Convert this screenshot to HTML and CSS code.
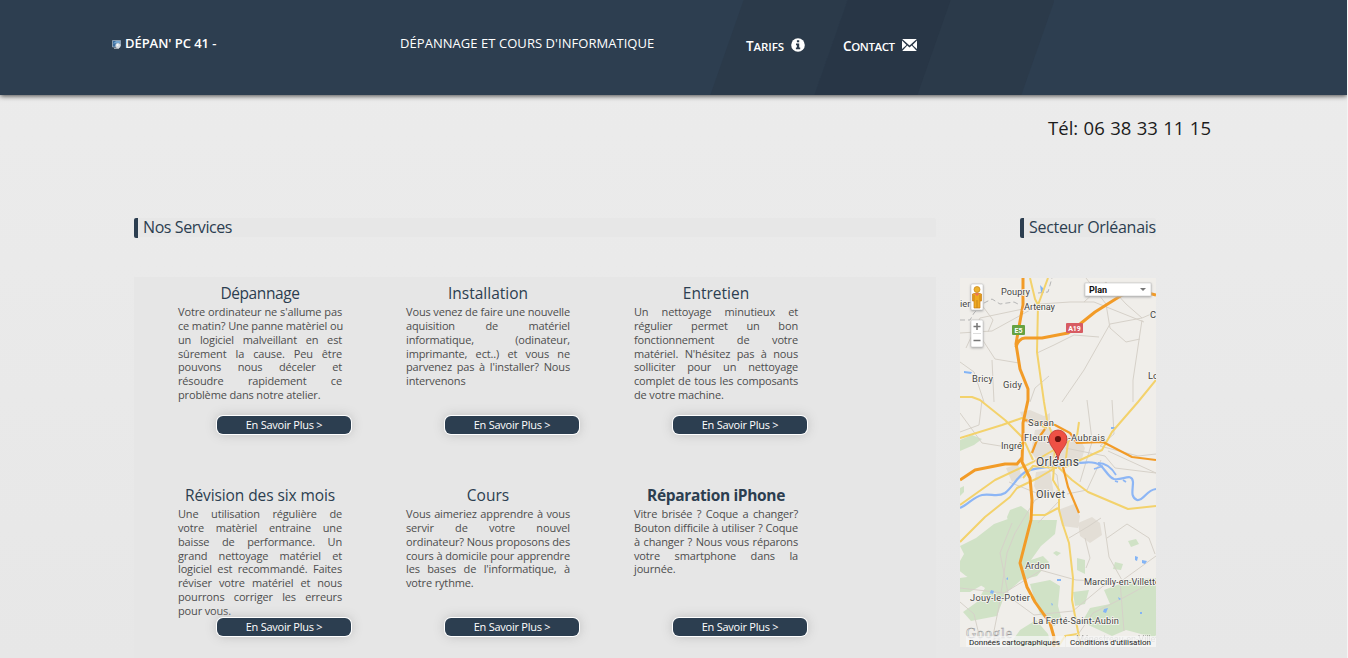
FILE: index.html
```html
<!DOCTYPE html>
<html lang="fr">
<head>
<meta charset="utf-8">
<title>Dépan' PC 41</title>
<link rel="stylesheet" href="styles.css">
</head>
<body>
<header class="top">
  <div class="brand">
    <svg class="brand-icon" width="9" height="9" viewBox="0 0 9 9"><path d="M.5.5h8v5l-5 1.500h-3z" fill="#3c6d9e" stroke="#9fb0c0" stroke-width=".8"/><path d="M1 3.500L4 1h4v2z" fill="#75a6d0"/><path d="M2 8.300h5" stroke="#b8bec5"/><circle cx="6" cy="5.600" r="2.600" fill="#d5dce3"/><circle cx="5.500" cy="5" r="1" fill="#f7f9fb"/></svg>
    <span class="brand-name">DÉPAN' PC 41 -</span>
  </div>
  <p class="tagline">DÉPANNAGE ET COURS D'INFORMATIQUE</p>
  <nav class="menu">
    <a class="tab"><span class="tab-in"><span class="label tarifs">Tarifs</span><svg width="14" height="14" viewBox="0 0 14 14"><circle cx="7" cy="7" r="6.800" fill="#fff"/><path d="M5.900 2.200h2.300v2H5.900zM5 5.500h3.200v4.100h1v1.700H4.900V9.600h1V7.200H5z" fill="#2b3a4a"/></svg></span></a>
    <a class="tab dark"><span class="tab-in"><span class="label contact">Contact</span><svg width="15" height="12" viewBox="0 0 15 12"><path fill="#fff" d="M.2 0h14.600L7.500 6.400zM0 1.600L4.500 6 0 10zM15 1.600V10L10.500 6zM5.300 6.600L7.500 8.500l2.200-1.900L14.800 12H.2z"/></svg></span></a>
    <a class="tab"></a>
  </nav>
</header>
<p class="phone">Tél: 06 38 33 11 15</p>
<main class="columns">
  <section class="services">
    <h2 class="title"><span class="nos">Nos Services</span></h2>
    <div class="grid">
      <article class="card"><h3 class="h-a">Dépannage</h3><p class="copy"><span>Votre ordinateur ne s'allume pas</span><span>ce matin? Une panne matèriel ou</span><span>un logiciel malveillant en est</span><span>sûrement la cause. Peu être</span><span>pouvons nous déceler et</span><span>résoudre rapidement ce</span><span>problème dans notre atelier.</span></p><a class="more">En Savoir Plus &gt;</a></article>
      <article class="card"><h3 class="h-b">Installation</h3><p class="copy"><span>Vous venez de faire une nouvelle</span><span>aquisition de matériel</span><span>informatique, (odinateur,</span><span>imprimante, ect..) et vous ne</span><span>parvenez pas à l'installer? Nous</span><span>intervenons</span></p><a class="more">En Savoir Plus &gt;</a></article>
      <article class="card"><h3 class="h-c">Entretien</h3><p class="copy"><span>Un nettoyage minutieux et</span><span>régulier permet un bon</span><span>fonctionnement de votre</span><span>matériel. N'hésitez pas à nous</span><span>solliciter pour un nettoyage</span><span>complet de tous les composants</span><span>de votre machine.</span></p><a class="more">En Savoir Plus &gt;</a></article>
      <article class="card"><h3 class="h-d">Révision des six mois</h3><p class="copy"><span>Une utilisation régulière de</span><span>votre matèriel entraine une</span><span>baisse de performance. Un</span><span>grand nettoyage matériel et</span><span>logiciel est recommandé. Faites</span><span>réviser votre matériel et nous</span><span>pourrons corriger les erreurs</span><span>pour vous.</span></p><a class="more">En Savoir Plus &gt;</a></article>
      <article class="card"><h3 class="h-e">Cours</h3><p class="copy"><span>Vous aimeriez apprendre à vous</span><span>servir de votre nouvel</span><span>ordinateur? Nous proposons des</span><span>cours à domicile pour apprendre</span><span>les bases de l'informatique, à</span><span>votre rythme.</span></p><a class="more">En Savoir Plus &gt;</a></article>
      <article class="card"><h3 class="h-f">Réparation iPhone</h3><p class="copy"><span>Vitre brisée ? Coque a changer?</span><span>Bouton difficile à utiliser ? Coque</span><span>à changer ? Nous vous réparons</span><span>votre smartphone dans la</span><span>journée.</span></p><a class="more">En Savoir Plus &gt;</a></article>
    </div>
  </section>
  <aside class="sector">
    <h2 class="title"><span class="sec">Secteur Orléanais</span></h2>
    <svg class="map" width="196" height="369" viewBox="0 0 196 369">
      <rect width="196" height="369" fill="#f0eeea"/>
      <g fill="#d0e2c6">
        <path d="M50 232l11-4 8 6 0 12-20 1-2-8zM69 242h28l-2 14-14 12-10 14 12-4 6 6-12 14-16 4-16 14-8 22-26 5-8-9 14-10 8-14-19-12-10-8 8-14-4-8 16-8 18-14 14-5zM0 300l14-2 10 8-14 8H0zM70 306l20-4 10 6-2 20 4 14-8 6-14-12-6-16zM117 280l8 2 0 14-8-4zM113 314l16-2-4 14-10 2zM144 312l26-10 26-2v60l-30-8-14 6-30-14 8-14 20-4zM155 284l8 2-2 6-8-1zM168 263l8-2 3 5-8 3zM0 162l12-5 10 4-8 6-14 6zM0 210l4-2v6l-4 4zM60 352l16-10 12 14 4 13H48zM96 273l5 2-4 3-4-3z"/>
      </g>
      <g fill="#e3ded6">
        <path d="M60 134l10-2 14 6 6-3v10l-14 3-12-4zM75 152l14-2 16 8 14 2 6 10-4 14-20 6-20-2-10-14zM46 190l12-4 4 14-10 4zM76 194l14-2 4 24-14 4-6-12zM98 232l16-6 6 12-2 12-16-2zM118 245l14-6 8 6 2 12-12 8-10-7z"/>
      </g>
      <g fill="none" stroke="#d6d1c9" stroke-width="1">
        <path d="M0 55l32-2 40-22 8-5 30-2 24 0 50 20M28 54l5-12-12-16M63 31L20 40 6 70M126 0l20 26 4 24 16 14 14-3M124 24l22-20 20 22 16 14 14-6M182 40l-32 6-26 46-22 32M182 42l-9 60 0 22M59 85l-24-4-13-20M32 82l2 42M77 75l17-8 20-10 25 2M70 124l5-14 14-12M0 84l14 10 10 30M0 135l22 30 37 6M22 122l-3 25-19 7M127 122l5 40M152 122l2 34-14 12 38 10 18-2M105 170l40 8 10 12 41 5M120 204l12-40M77 182l20 15 3 25-22 23M99 212l-24 10-20 33-8 20-6 40M49 204l30 12M107 216l20-4 14-30M148 173l48 22M109 260l20-12 12-8M125 260l5 20-4 10M80 292l36 10 44 2 36-26M48 315l-8-40 12-30M44 315l36-22M44 315L0 310M44 315l30 22 39-4 30-25 17-5 4 50M0 324l14 12 8 33M119 355l14-20 30-15 33-18M41 318l-8 40M147 260l20-14 22 14 6 16M144 244l5 35 14 25"/>
      </g>
      <path d="M0 42h10l4-7 10-10 8-4 8 5 14-2 6 3M78 15l10-1 4-14" fill="none" stroke="#b5b5b5" stroke-dasharray="5 3"/>
      <path d="M0 230c8-3 13-11 22-13s15 3 23-2c8-6 13-18 22-22 12-4 24-4 38-6s28-5 35 0c6 5 8 12 14 14 8 2 18-7 19 3 0 8-3 15 4 18 7 1 9-10 19-11" fill="none" stroke="#8db6f5" stroke-width="2.200"/>
      <path d="M138 185c10 0 15 7 18 12M134 191l9-3M155 203l3 1M163 202l3 2" fill="none" stroke="#8db6f5" stroke-width="1.800"/>
      <g fill="#83b4f5"><path d="M80 7l3 3 1 5-3-1zM4 93l8 1-1 2-7-1zM151 149h4l-1 2h-3zM175 278l3 1-1 4-2-1zM182 282l5 1-2 3-3-1zM97 301h4v2h-4zM144 331l4-1-2 5-3-1zM31 312l3 1-1 3-3-1zM46 301l2-2 0 3zM91 325l2 1-1 2zM158 319l3 2-2 1zM180 334h2v2h-2z"/></g>
      <g fill="none" stroke="#f3d26c" stroke-width="2" stroke-linejoin="round">
        <path d="M70 0l5 21 3 6-1 47 7 50 3 18 8 23-1 24-1 13 6 10v20l4 15 6 18 4 35-1 22 7 37 3 10M88 0L78 27M0 119l12 0 8 3 25 20 18 18 10 22M0 160l42-13 20-7 25 10M0 227l35-25 38-18 26-15M196 102l-18 22-26 30-10 18-37 17M98 189l14 13 16 12 40 17 28-3M95 190l-17 10-21 10-7 9-25 20-25 25M71 237l14 0 13-7M105 188l3-24 9-6 2-14M117 356l-12 2-7 11M63 200l10-12 24 2"/>
      </g>
      <g fill="none" stroke="#f29b27" stroke-width="3" stroke-linejoin="round">
        <path d="M63 0v27l-6 33-1 6 4 25 8 20v11l-5 23v10l-1 29 8 16 2 22-1 20-11 43 7 24 8 15 15 21 4 14v10"/>
        <path d="M56 69c1-5 5-9 9-9l17 0 26-5 12-9 15-12 27-17 14-5 20 5"/>
        <path d="M0 202l15-10 30-6 12 0 5-6"/>
        <path stroke-width="2.200" d="M63 142l15 2 17 3 15 8 7 10 26-1 29 15 24 3M103 189l5 20 11 26M85 151l-8 11-5 13"/>
      </g>
      <g class="place">
        <text x="41" y="17" textLength="29">Poupry</text><text x="64" y="31.500" textLength="31">Artenay</text><text x="-6" y="29">Cier</text><text x="190" y="40">Che</text><text x="188" y="101">Loury</text>
        <text x="12" y="104" textLength="21">Bricy</text><text x="43" y="110" textLength="19">Gidy</text><text x="68" y="148" textLength="26">Saran</text><text x="64" y="162.500" textLength="81">Fleury-les-Aubrais</text><text x="41" y="171" textLength="21">Ingré</text>
        <text class="city" x="76" y="188" textLength="43">Orléans</text><text class="town" x="76" y="220" textLength="29">Olivet</text><text x="65" y="291" textLength="25">Ardon</text><text x="124" y="307" textLength="76">Marcilly-en-Villette</text><text x="10" y="322.500" textLength="60">Jouy-le-Potier</text><text x="73" y="346" textLength="86">La Ferté-Saint-Aubin</text><text class="faint" x="116" y="364" textLength="90">Ménestreau-en-Villette</text>
      </g>
      <text class="google" x="6" y="360" textLength="46">Google</text>
      <rect x="52" y="47" width="13" height="10" rx="1" fill="#66a241"/><text class="road" x="58.500" y="55">E5</text>
      <rect x="106" y="45" width="17" height="10" rx="1" fill="#d75b62"/><text class="road" x="114.500" y="53">A19</text>
      <path d="M98 182c-1-10-9-13-9-21a9 9 0 0 1 18 0c0 8-8 11-9 21z" fill="#ee5145" stroke="#bb342b" stroke-width=".8"/><circle cx="98" cy="161" r="3.100" fill="#6b110d"/>
      <g class="control"><rect x="11" y="6" width="12" height="26" rx="1"/><rect x="11" y="42" width="12" height="27" rx="1"/><rect x="125" y="5" width="66" height="13"/></g>
      <path d="M13 55.500h8" stroke="#ddd"/><path d="M13.500 48.500h7M17 45v7M13.500 62.500h7" stroke="#777" stroke-width="1.500"/>
      <circle cx="17" cy="11.500" r="3" fill="#eeb32d" stroke="#c58219" stroke-width=".7"/><path d="M12.500 16q4.500-2 9 0v7h-1.500v7h-6v-7h-1.500z" fill="#efaa21" stroke="#c77c15" stroke-width=".7"/><path d="M17 22v8M14 17v6M20 17v6" stroke="#bd7a17" stroke-width=".7"/><path d="M14.500 15.500h5L17 18z" fill="#ed6d62"/>
      <text class="plan" x="129" y="15" textLength="18">Plan</text><path d="M180 10h6l-3 3z" fill="#777"/>
      <rect x="6" y="358" width="99" height="11" fill="#f5f5f5" opacity=".75"/><rect x="106" y="358" width="90" height="11" fill="#f5f5f5" opacity=".75"/>
      <text class="legal" x="9" y="367" textLength="91">Données cartographiques</text><text class="legal" x="110" y="367" textLength="81">Conditions d'utilisation</text>
    </svg>
  </aside>
</main>
</body>
</html>
```
FILE: styles.css
```css
* { box-sizing: border-box; }
html { background: #f5f5f5; }
body { margin: 0; width: 1347px; height: 658px; overflow: hidden; background: linear-gradient(#ececec, #e7e7e7); font-family: "Trebuchet MS", "Open Sans", "Noto Sans", sans-serif; color: #2c3e50; }
h2, h3, p { margin: 0; font-weight: 400; }
.top { height: 95px; display: flex; background: #2d3e50; color: #fff; box-shadow: 0 1px 5px #444; white-space: nowrap; }
.brand { width: 400px; padding: 34px 0 0 112px; display: flex; gap: 4px; font-size: 13px; line-height: 18px; }
.brand-icon { margin-top: 6px; }
.brand-name { font-weight: 600; letter-spacing: -.05px; }
.tagline { width: 327px; padding-top: 34px; font-size: 13px; line-height: 18px; letter-spacing: .05px; }
.menu { display: flex; height: 95px; overflow: hidden; width: 344px; margin-left: -17px; padding-left: 17px; }
.tab { flex: 0 0 103.6px; height: 95px; background: #2b3a4a; transform: skewX(-19.3deg); }
.dark { background: #283646; }
.tab-in { display: flex; gap: 4px; padding: 37px 0 0 19px; transform: skewX(19.3deg); }
.label { display: block; width: 41px; font-size: 11.5px; line-height: 18px; height: 18px; font-weight: 600; text-transform: uppercase; letter-spacing: -.1px; }
.label::first-letter { font-size: 13.5px; }
.contact { width: 55px; letter-spacing: -.4px; }
.tab-in { padding-left: 19px; margin-left: -7px; }
.dark .tab-in { padding-left: 12px; }
.tab svg { margin-top: 1px; }
.dark svg { margin-top: 2px; }
.phone { padding: 20px 136px 0 0; height: 123px; text-align: right; font-size: 18.5px; line-height: 26px; font-weight: 500; word-spacing: .6px; color: #1c1c1c; }
.columns { display: flex; gap: 24px; padding-left: 134px; }
.services { width: 802px; }
.title { height: 20px; border-left: 4px solid #2c3e50; border-radius: 2px; padding-left: 5px; background: linear-gradient(#e7e7e7, #e7e7e7) 0 0 / 100% 19px no-repeat; font-size: 16px; line-height: 19px; white-space: nowrap; }
.nos { letter-spacing: -.42px; }
.sec { letter-spacing: -.3px; }
.grid { margin-top: 39px; height: 382px; padding: 7px 0 0 44px; background: #e6e6e6; display: grid; grid-template-columns: repeat(3, 228px); grid-template-rows: 202px 202px; }
.card { display: flex; flex-direction: column; height: 150px; width: 164px; white-space: nowrap; }
.card h3 { font-size: 15.5px; line-height: 19px; height: 21px; text-align: center; }
.card .h-a { letter-spacing: -.4px; }
.card .h-d { letter-spacing: -.1px; }
.card .h-f { font-weight: 700; letter-spacing: -.35px; }
.copy { height: 111px; font-size: 11px; line-height: 13.86px; color: #4d4d4d; letter-spacing: -.15px; }
.copy span { display: block; text-align: justify; text-align-last: justify; }
.copy span:last-child { text-align-last: left; }
.more { width: 134px; height: 18px; flex: none; margin-left: 39px; border-radius: 6px; background: #2c3e50; box-shadow: 0 0 0 1px #fff, 0 0 12px #b8b8b8; color: #fff; font-size: 11px; line-height: 17px; text-align: center; letter-spacing: -.25px; }
.sector { width: 196px; }
.sector .title { margin-left: 60px; }
.map { display: block; margin-top: 40px; font-family: Roboto, sans-serif; }
.place { font-size: 9.3px; fill: #444; stroke: #f6f5f1; stroke-width: 1.6px; paint-order: stroke; }
.city { font-size: 12px; }
.town { font-size: 11px; }
.faint { opacity: .45; }
.google { font: 14px "Liberation Serif", serif; fill: #fff; stroke: #999; stroke-width: .5px; }
.road { font-size: 7px; font-weight: 700; fill: #fff; text-anchor: middle; }
.plan { font-size: 9px; font-weight: 700; fill: #111; }
.legal { font-size: 8px; fill: #222; }
.control { fill: #fff; stroke: #bbb; stroke-width: .5px; filter: drop-shadow(0 1px 1px #aaa); }
```
